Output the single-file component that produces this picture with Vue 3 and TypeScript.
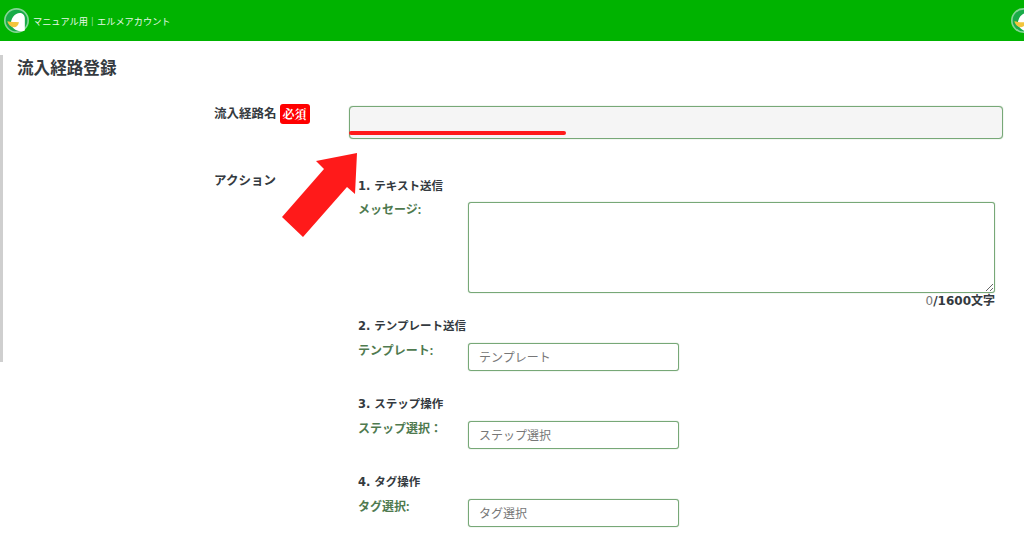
<script setup lang="ts">
interface Step {
  title: string
  label: string
  placeholder: string
}
const steps: Step[] = [
  { title: '2. テンプレート送信', label: 'テンプレート:', placeholder: 'テンプレート' },
  { title: '3. ステップ操作', label: 'ステップ選択：', placeholder: 'ステップ選択' },
  { title: '4. タグ操作', label: 'タグ選択:', placeholder: 'タグ選択' },
]
</script>

<template>
  <div class="page">
    <header class="topbar">
      <div class="brand">
        <svg class="logo" viewBox="0 0 30 30" aria-hidden="true">
          <circle cx="15" cy="15" r="14" fill="#19ab48" stroke="#86d596" stroke-width="2" />
          <path d="M8 21C8 12 13 6 19 6c4 0 6 3 6 7v14c-4 2-10 1-13-2z" fill="#fff" />
          <path d="M4 16c5 1 9 1 14 1-1 4-3 6-6 6-4 0-7-3-8-7z" fill="#f2c53d" />
        </svg>
        <span class="account">マニュアル用｜エルメアカウント</span>
      </div>
      <svg class="logo logo-right" viewBox="0 0 30 30" aria-hidden="true">
        <circle cx="15" cy="15" r="14" fill="#19ab48" stroke="#86d596" stroke-width="2" />
        <path d="M8 21C8 12 13 6 19 6c4 0 6 3 6 7v14c-4 2-10 1-13-2z" fill="#fff" />
        <path d="M4 16c5 1 9 1 14 1-1 4-3 6-6 6-4 0-7-3-8-7z" fill="#f2c53d" />
      </svg>
    </header>

    <div class="body">
      <div class="rail"></div>
      <main class="content">
        <h1 class="title">流入経路登録</h1>

        <div class="form">
          <div class="row-name">
            <div class="field-label">
              <span>流入経路名</span>
              <span class="required">必須</span>
            </div>
            <div class="name-wrap">
              <input class="name-input" type="text" />
              <span class="underline"></span>
              <svg class="arrow" viewBox="0 0 76 85" aria-hidden="true">
                <path d="M75 0 L34 8 L42 16 L0 64 L21 84 L65 34 L73 41 Z" fill="#ff1a1a" />
              </svg>
            </div>
          </div>

          <div class="row-action">
            <div class="field-label action-label">アクション</div>
            <div class="actions">
              <section class="text-section">
                <h2 class="step-title">1. テキスト送信</h2>
                <div class="step-row">
                  <label class="step-label">メッセージ:</label>
                  <textarea class="message"></textarea>
                </div>
                <div class="counter"><span class="count">0</span>/1600文字</div>
              </section>

              <section v-for="step in steps" :key="step.title" class="step">
                <h2 class="step-title">{{ step.title }}</h2>
                <div class="step-row">
                  <label class="step-label">{{ step.label }}</label>
                  <input class="step-input" type="text" :placeholder="step.placeholder" />
                </div>
              </section>
            </div>
          </div>
        </div>
      </main>
    </div>
  </div>
</template>

<style>
html, body {
  margin: 0;
  background: #fff;
  overflow: hidden;
}
</style>

<style scoped>
.page {
  width: 1024px;
  height: 538px;
  overflow: hidden;
  font-family: "Open Sans", "Liberation Sans", "Noto Sans CJK JP", sans-serif;
  color: #343a40;
}
.topbar {
  height: 41px;
  background: #00b300;
  display: flex;
  align-items: center;
  justify-content: space-between;
  overflow: hidden;
}
.brand {
  display: flex;
  align-items: center;
  gap: 4px;
  padding-left: 4px;
}
.logo {
  width: 25px;
  height: 25px;
  flex: none;
}
.logo-right {
  margin-right: -12px;
}
.account {
  font-size: 9.2px;
  color: #e8f8e8;
  white-space: nowrap;
}
.body {
  display: flex;
}
.rail {
  width: 3px;
  height: 307px;
  margin-top: 14px;
  background: #cfcfcf;
  flex: none;
}
.content {
  flex: 1;
  min-width: 0;
}
.title {
  margin: 17px 0 0 14px;
  font-size: 16.6px;
  line-height: 20px;
  font-weight: 700;
}
.form {
  margin: 27px 21px 0 211px;
}
.row-name {
  display: flex;
}
.field-label {
  width: 135px;
  flex: none;
  font-size: 12.5px;
  font-weight: 600;
  display: flex;
  align-items: flex-start;
  gap: 3px;
  line-height: 17px;
}
.required {
  background: #f00;
  color: #fff;
  border-radius: 3px;
  font-family: "Noto Serif CJK JP", "Noto Sans CJK JP", serif;
  font-size: 12px;
  font-weight: 700;
  line-height: 20px;
  padding: 0 3px;
  margin-top: -1px;
}
.name-wrap {
  position: relative;
  flex: 1;
}
.name-input {
  display: block;
  box-sizing: border-box;
  width: 100%;
  height: 33px;
  margin-top: 1px;
  border: 1px solid #77a877;
  border-radius: 4px;
  background: #f5f5f5;
  outline: none;
  box-shadow: 0 0 1px #77a877;
}
.underline {
  position: absolute;
  left: 0;
  top: 26px;
  width: 217px;
  height: 4px;
  border-radius: 2px;
  background: #ff1a1a;
}
.arrow {
  position: absolute;
  left: -67px;
  top: 48px;
  width: 76px;
  height: 85px;
}
.row-action {
  display: flex;
  margin-top: 33px;
}
.actions {
  flex: 1;
  padding: 7px 8px 0 9px;
  min-width: 0;
}
.step-title {
  margin: 0;
  font-family: "DejaVu Sans", "Noto Sans CJK JP", sans-serif;
  font-size: 11.5px;
  line-height: 14px;
  font-weight: 700;
}
.step-row {
  display: flex;
  align-items: flex-start;
  margin-top: 10px;
}
.step-label {
  width: 110px;
  flex: none;
  font-size: 12px;
  line-height: 14px;
  font-weight: 700;
  color: #4f7a4f;
}
.message {
  display: block;
  box-sizing: border-box;
  flex: 1;
  height: 91px;
  border: 1px solid #77a877;
  border-radius: 3px;
  background: #fff;
  outline: none;
  margin: -1px 0 0;
  box-shadow: 0 0 1px #77a877;
}
.counter {
  text-align: right;
  font-family: "DejaVu Sans", "Noto Sans CJK JP", sans-serif;
  font-size: 12px;
  line-height: 14px;
  font-weight: 700;
  margin-top: 1px;
}
.count {
  color: #777;
  font-weight: 400;
}
.text-section {
  margin-bottom: 11px;
}
.step {
  margin-bottom: 26px;
}
.step .step-row {
  margin-top: 11px;
}
.step-input {
  display: block;
  box-sizing: border-box;
  width: 211px;
  height: 28px;
  border: 1px solid #77a877;
  border-radius: 3px;
  padding: 0 10px;
  font-family: inherit;
  font-size: 12px;
  background: #fff;
  outline: none;
  margin: -1px 0 0;
  box-shadow: 0 0 1px #77a877;
}
.step-input::placeholder {
  color: #777;
}
</style>
